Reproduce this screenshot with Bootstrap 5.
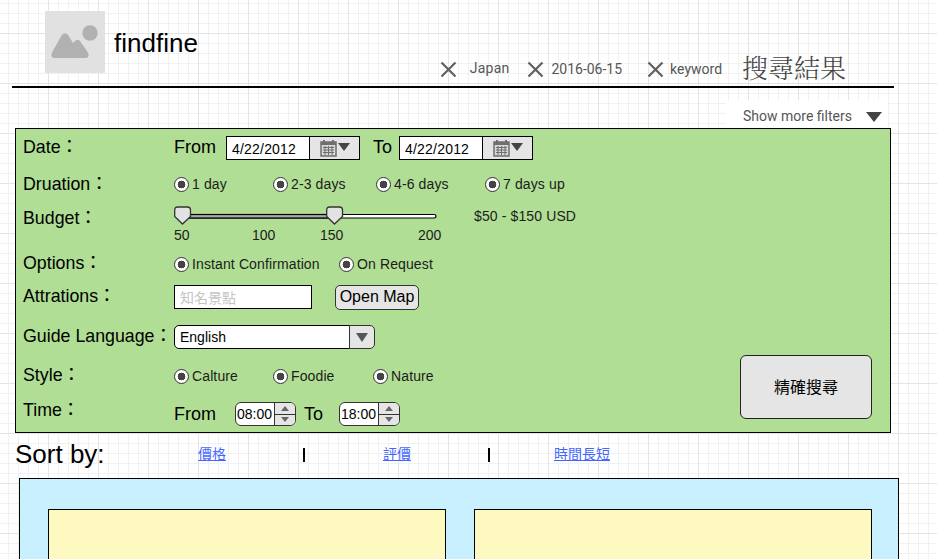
<!DOCTYPE html>
<html lang="zh-Hant">
<head>
<meta charset="utf-8">
<title>findfine</title>
<link href="https://cdn.jsdelivr.net/npm/bootstrap@5.3.0/dist/css/bootstrap.min.css" rel="stylesheet">
<style>
html,body{height:559px;overflow:hidden}
body{font-family:"Liberation Sans","Noto Sans CJK TC",sans-serif;color:#000;background-color:#fff;
 background-image:
  linear-gradient(to right,#e4e4e4 1px,transparent 1px),
  linear-gradient(to bottom,#e4e4e4 1px,transparent 1px),
  linear-gradient(to right,#f1f1f1 1px,transparent 1px),
  linear-gradient(to bottom,#f1f1f1 1px,transparent 1px);
 background-size:50px 50px,50px 50px,10px 10px,10px 10px;
 background-position:48px 0,0 33px,8px 0,0 3px;}
.top-head{margin-left:12px;width:882px;height:88px;border-bottom:2px solid #000}
.logo-box{width:60px;height:62px;margin:11px 0 0 33px;background:#e1e1e1}
.brand-name{font-size:26px;line-height:30px;margin:28px 0 0 9px}
.tag-list{margin-left:242px;height:86px;padding-bottom:8px;font-family:Roboto,sans-serif;font-size:14px;color:#555}
.tag-x{width:17px;height:17px;display:block}
.tag-t1{margin:0 18px -1px 13px;letter-spacing:.2px}
.tag-t2{margin:0 25px -2px 7px}
.tag-t3{margin:0 20px -2px 6px}
.result-title{font-size:26px;line-height:34px;color:#444;margin-bottom:-6px;font-family:"Noto Serif CJK TC","Liberation Serif","Noto Sans CJK TC",serif;font-weight:300}
.more-row{margin:12px 0 0 726px;width:162px;height:28px;background:#fff;padding:4px 6px 0 17px;font-family:Roboto,sans-serif;font-size:14px;color:#555}
.caret-down{width:16px;height:10px;display:block;margin-top:1px}
.filter-panel{margin-left:15px;width:876px;height:305px;border:1px solid #000;background:#b0de95;padding:6px 18px 13px 7px}
.frow{display:flex;align-items:center}
.flabel{width:151px;font-size:17.8px;line-height:24px;flex:none;white-space:nowrap}
.r-date{height:26px}
.r-date .flabel,.r-date .word{margin-bottom:2px}
.r-opt .flabel,.r-att .flabel,.r-lang .flabel,.r-sty .flabel{margin-bottom:2px}
.r-dur{height:26px;margin-top:10px}
.r-bud{height:41px;margin-top:9px;align-items:flex-start}
.r-opt{height:24px;margin-top:5px}
.r-att{height:26px;margin-top:8px}
.r-lang{height:26px;margin-top:14px}
.r-sty{height:24px;margin-top:14px}
.r-time{height:26px;margin-top:13px}
.word{font-size:18px;line-height:24px}
.wfrom{width:52px}
.wto{margin:0 7px 0 13px}
.date-group{width:134px;flex-wrap:nowrap}
.date-group .form-control,.lang-group .form-control,.place-in{height:24px;border:1.5px solid #000;border-radius:0;padding:1px 5px 0;font-size:14px;color:#000;background:#fff;box-shadow:none}
.date-group .form-control{width:84px;flex:none;letter-spacing:.2px}
.date-group .btn{height:24px;width:51px;flex:none;background:#e5e5e5;border:1.5px solid #000;border-radius:0;padding:0 0 0 10px;display:flex;align-items:center}
.opt-grid{display:grid;font-size:14px;line-height:18px;color:#1c1c1c;letter-spacing:.12px}
.g-dur{grid-template-columns:99px 103px 109px auto}
.g-opt{grid-template-columns:165px auto}
.g-sty{grid-template-columns:99px 100px auto}
.opt-item{display:flex;align-items:center;gap:3px;white-space:nowrap}
.opt-item .form-check-input{width:15px;height:15px;margin:0;flex:none;border:1.5px solid #333;background-color:#fff;background-image:radial-gradient(circle,#444 0 3.6px,transparent 4.1px);opacity:1}
.slide-wrap{width:270px}
.slide-svg{display:block;width:270px;height:21px}
.scale-row{display:flex;font-size:14px;line-height:16px;color:#1c1c1c}
.s1{width:78px}.s2{width:68px}.s3{width:98px}
.price-txt{font-size:14px;color:#1c1c1c;margin:0 0 0 30px;line-height:20px;letter-spacing:.12px}
.place-in{width:138px;flex:none;height:24px;padding-top:1px}
.place-in::placeholder{color:#c4c4c4}
.map-btn{margin-left:23px;height:25px;width:84px;padding:0;background:#e5e5e5;border:1.5px solid #333;border-radius:5px;font-size:16px;line-height:20px;color:#000}
.lang-group{width:201px;flex-wrap:nowrap}
.lang-group .form-control{border-radius:5px 0 0 5px;flex:1 1 auto;width:1%;padding-top:0}
.lang-group .btn{width:26px;height:24px;padding:0;background:#e5e5e5;border:1.5px solid #333;border-radius:0 5px 5px 0;display:flex;align-items:center;justify-content:center}
.lbl-up{margin-bottom:9px}
.time-from{width:61px}
.spin{display:flex;width:61px;height:24px;border:1.5px solid #333;border-radius:6px;overflow:hidden;background:#fff;flex:none}
.spin span.tv{width:39px;font-size:14px;line-height:22px;padding-left:1px;border-right:1.5px solid #333}
.spin-bt{flex:1;display:flex;flex-direction:column;background:#e5e5e5}
.spin-bt i{flex:1;display:flex;align-items:center;justify-content:center}
.spin-bt i+i{border-top:1.5px solid #333}
.time-to{margin:0 16px 0 8px}
.go-btn{width:132px;height:64px;background:#e5e5e5;border:1.5px solid #222;border-radius:6px;font-size:16px;color:#000;padding:1px 0 0;margin-top:auto;margin-bottom:0}
.sort-row{height:45px;margin-left:15px;display:grid;grid-template-columns:183px 105px 80px 105px 66px auto;align-items:center}
.sort-title{font-size:26px;line-height:40px;margin-bottom:4px}
.sort-row a{font-size:14px;color:#4466ff;margin-bottom:2px}
.sep-bar{display:block;width:2px;height:14px;background:#000;margin-bottom:2px}
.result-panel{margin-left:19px;width:880px;height:200px;border:1px solid #000;background:#c8f0ff;padding:30px 26px 0 28px}
.result-box{width:398px;height:200px;border:1px solid #000;background:#fef9c0}
</style>
</head>
<body>
<header class="top-head d-flex">
  <div class="logo-box d-flex align-items-center justify-content-center flex-none">
    <svg width="60" height="62" viewBox="0 0 60 62" aria-hidden="true"><circle cx="45" cy="22" r="7.700" fill="#b1b1b1"/><path d="M7 41.500L16.500 24.500Q20 20 23.500 24.500L28 32L30 30Q32.500 27.500 35 30L43 41.500Q45 47 40 47H10Q5 47 7 41.500z" fill="#b1b1b1"/></svg>
  </div>
  <div class="brand-name">findfine</div>
  <div class="tag-list d-flex align-items-end">
    <svg class="tag-x" viewBox="0 0 17 17" aria-hidden="true"><path d="M1.500 1.500l14 14m0-14l-14 14" stroke="#606060" stroke-width="2.200"/></svg>
    <span class="tag-t1">Japan</span>
    <svg class="tag-x" viewBox="0 0 17 17" aria-hidden="true"><path d="M1.500 1.500l14 14m0-14l-14 14" stroke="#606060" stroke-width="2.200"/></svg>
    <span class="tag-t2">2016-06-15</span>
    <svg class="tag-x" viewBox="0 0 17 17" aria-hidden="true"><path d="M1.500 1.500l14 14m0-14l-14 14" stroke="#606060" stroke-width="2.200"/></svg>
    <span class="tag-t3">keyword</span>
    <span class="result-title">搜尋結果</span>
  </div>
</header>

<div class="more-row d-flex align-items-center justify-content-between">
  <span>Show more filters</span>
  <svg class="caret-down" viewBox="0 0 16 10" aria-hidden="true"><path d="M0 0h16L8 10z" fill="#444"/></svg>
</div>

<form class="filter-panel d-flex justify-content-between">
  <div>
    <div class="frow r-date">
      <div class="flabel">Date：</div>
      <span class="word wfrom">From</span>
      <div class="input-group date-group">
        <input class="form-control" value="4/22/2012" aria-label="From date">
        <button class="btn" type="button" aria-label="Pick date">
          <svg width="30" height="18" viewBox="0 0 30 18" aria-hidden="true"><path d="M1 3h15v14H1z" fill="#d8d8d8" stroke="#6f6f6f" stroke-width="1.500"/><path d="M1 3h15v3H1z" fill="#6f6f6f"/><path d="M4 1v3M13 1v3" stroke="#6f6f6f" stroke-width="2"/><path d="M3 8.500h11M3 11h11M3 13.500h11M5 7v9M8.500 7v9M12 7v9" stroke="#6f6f6f"/><path d="M18 4h12l-6 8z" fill="#444"/></svg>
        </button>
      </div>
      <span class="word wto">To</span>
      <div class="input-group date-group">
        <input class="form-control" value="4/22/2012" aria-label="To date">
        <button class="btn" type="button" aria-label="Pick date">
          <svg width="30" height="18" viewBox="0 0 30 18" aria-hidden="true"><path d="M1 3h15v14H1z" fill="#d8d8d8" stroke="#6f6f6f" stroke-width="1.500"/><path d="M1 3h15v3H1z" fill="#6f6f6f"/><path d="M4 1v3M13 1v3" stroke="#6f6f6f" stroke-width="2"/><path d="M3 8.500h11M3 11h11M3 13.500h11M5 7v9M8.500 7v9M12 7v9" stroke="#6f6f6f"/><path d="M18 4h12l-6 8z" fill="#444"/></svg>
        </button>
      </div>
    </div>

    <div class="frow r-dur">
      <div class="flabel">Druation：</div>
      <div class="opt-grid g-dur">
        <label class="opt-item"><input class="form-check-input" type="radio" checked>1 day</label>
        <label class="opt-item"><input class="form-check-input" type="radio" checked>2-3 days</label>
        <label class="opt-item"><input class="form-check-input" type="radio" checked>4-6 days</label>
        <label class="opt-item"><input class="form-check-input" type="radio" checked>7 days up</label>
      </div>
    </div>

    <div class="frow r-bud">
      <div class="flabel">Budget：</div>
      <div class="slide-wrap">
        <svg class="slide-svg" viewBox="0 0 270 21" aria-hidden="true">
          <rect x="8" y="8.500" width="254" height="3.500" rx="1.700" fill="#fff" stroke="#000" stroke-width="1.200"/>
          <rect x="8" y="8.500" width="152" height="3.500" fill="#a9a9a9" stroke="#000" stroke-width="1.200"/>
          <path d="M3.500 1h10c2 0 3 1 3 3v6.500L8.500 18 .7 10.500V4c0-2 1-3 2.800-3z" fill="#e2e2e2" stroke="#333" stroke-width="1.300"/>
          <path d="M155.500 1h10c2 0 3 1 3 3v6.500l-8 7.500-7.800-7.500V4c0-2 1-3 2.800-3z" fill="#e2e2e2" stroke="#333" stroke-width="1.300"/>
        </svg>
        <div class="scale-row"><span class="s1">50</span><span class="s2">100</span><span class="s3">150</span><span>200</span></div>
      </div>
      <div class="price-txt">$50 - $150 USD</div>
    </div>

    <div class="frow r-opt">
      <div class="flabel">Options：</div>
      <div class="opt-grid g-opt">
        <label class="opt-item"><input class="form-check-input" type="radio" checked>Instant Confirmation</label>
        <label class="opt-item"><input class="form-check-input" type="radio" checked>On Request</label>
      </div>
    </div>

    <div class="frow r-att">
      <div class="flabel">Attrations：</div>
      <input class="form-control place-in" placeholder="知名景點" aria-label="Attractions">
      <button class="map-btn" type="button">Open Map</button>
    </div>

    <div class="frow r-lang">
      <div class="flabel">Guide Language：</div>
      <div class="input-group lang-group">
        <input class="form-control" value="English" aria-label="Guide language">
        <button class="btn" type="button" aria-label="Choose language">
          <svg width="12" height="9" viewBox="0 0 12 9" aria-hidden="true"><path d="M0 0h12L6 9z" fill="#555"/></svg>
        </button>
      </div>
    </div>

    <div class="frow r-sty">
      <div class="flabel">Style：</div>
      <div class="opt-grid g-sty">
        <label class="opt-item"><input class="form-check-input" type="radio" checked>Calture</label>
        <label class="opt-item"><input class="form-check-input" type="radio" checked>Foodie</label>
        <label class="opt-item"><input class="form-check-input" type="radio" checked>Nature</label>
      </div>
    </div>

    <div class="frow r-time">
      <div class="flabel lbl-up">Time：</div>
      <span class="word time-from">From</span>
      <div class="spin"><span class="tv">08:00</span><span class="spin-bt"><i><svg width="8" height="5" viewBox="0 0 8 5" aria-hidden="true"><path d="M0 5h8L4 0z" fill="#666"/></svg></i><i><svg width="8" height="5" viewBox="0 0 8 5" aria-hidden="true"><path d="M0 0h8L4 5z" fill="#666"/></svg></i></span></div>
      <span class="word time-to">To</span>
      <div class="spin"><span class="tv">18:00</span><span class="spin-bt"><i><svg width="8" height="5" viewBox="0 0 8 5" aria-hidden="true"><path d="M0 5h8L4 0z" fill="#666"/></svg></i><i><svg width="8" height="5" viewBox="0 0 8 5" aria-hidden="true"><path d="M0 0h8L4 5z" fill="#666"/></svg></i></span></div>
    </div>
  </div>
  <button class="go-btn" type="button">精確搜尋</button>
</form>

<nav class="sort-row">
  <span class="sort-title">Sort by:</span>
  <a href="#">價格</a>
  <span class="sep-bar"></span>
  <a href="#">評價</a>
  <span class="sep-bar"></span>
  <a href="#">時間長短</a>
</nav>

<section class="result-panel d-flex justify-content-between">
  <div class="result-box"></div>
  <div class="result-box"></div>
</section>
<script src="https://cdn.jsdelivr.net/npm/bootstrap@5.3.0/dist/js/bootstrap.bundle.min.js"></script>
</body>
</html>
